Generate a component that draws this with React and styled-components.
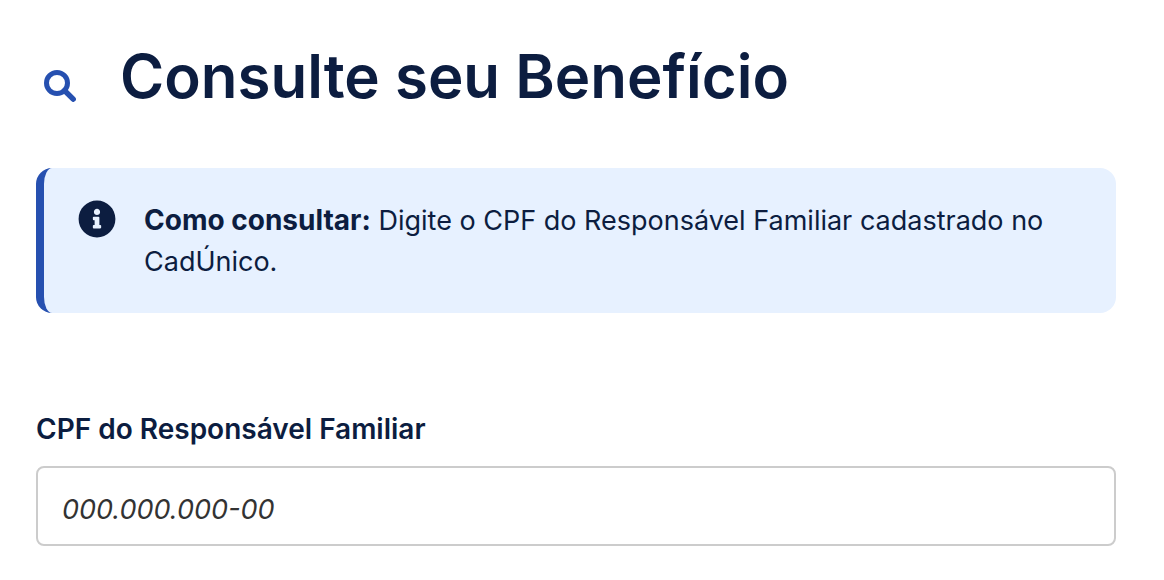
import React from "react";
import styled, { createGlobalStyle } from "styled-components";
import { FaInfoCircle } from "react-icons/fa";

export default function App() {

    function SearchIcon() {
        return (
            <svg viewBox="0 0 32 32" fill="none" stroke="currentColor" aria-hidden="true">
                <circle cx="13" cy="13" r="10.5" strokeWidth="5" />
                <path d="M20.5 20.5L29.2 29.2" strokeWidth="5.4" strokeLinecap="round" />
            </svg>
        )
    };

    return (
        <>
            <GlobalStyle />
            <Page>
                <Header>
                    <SearchIcon />
                    <Title>Consulte seu Benefício</Title>
                </Header>

                <InfoBox>
                    <FaInfoCircle aria-hidden="true" />
                    <InfoText>
                        <strong>Como consultar:</strong> Digite o CPF do Responsável Familiar cadastrado no CadÚnico.
                    </InfoText>
                </InfoBox>

                <Form>
                    <Label htmlFor="cpf">CPF do Responsável Familiar</Label>
                    <Input id="cpf" type="text" inputMode="numeric" placeholder="000.000.000-00" />
                </Form>
            </Page>
        </>
    )
};

const GlobalStyle = createGlobalStyle`

    * {
        box-sizing: border-box;
    }

    body {
        margin: 0;
        color: #0c1d40;
        background-color: #FFFFFF;
        font-family: Inter, sans-serif;
    }
`;

const Page = styled.main`

    padding: 36px 48px 34px 36px;
`;

const Header = styled.header`

    display: flex;
    align-items: center;
    gap: 44px;
    padding-left: 8px;
    margin-bottom: 52px;

    svg {
        width: 32px;
        height: 32px;
        flex-shrink: 0;
        margin-top: 20px;
        color: #2650b0;
    }
`;

const Title = styled.h1`

    margin: 0;
    font-size: 60px;
    font-weight: 600;
    line-height: 80px;
`;

// ------------------------------>>

const InfoBox = styled.section`

    display: flex;
    align-items: flex-start;
    gap: 28px;
    padding: 32px 34px 31px;
    border-radius: 16px;
    border-left: 8px solid #2650b0;
    background-color: #e7f1ff;

    svg {
        width: 38px;
        height: 38px;
        flex-shrink: 0;
    }
`;

const InfoText = styled.p`

    margin: 0;
    font-size: 27px;
    line-height: 41px;

    strong {
        font-size: 28px;
        font-weight: 700;
    }
`;

// ------------------------------>>

const Form = styled.form`

    display: flex;
    flex-direction: column;
    gap: 16px;
    margin-top: 96px;
`;

const Label = styled.label`

    font-size: 28px;
    font-weight: 600;
    line-height: 41px;
`;

const Input = styled.input`

    width: 100%;
    height: 80px;
    padding: 6px 24px 0;
    color: #333333;
    font-family: inherit;
    font-size: 27px;
    border: 2px solid #cccccc;
    border-radius: 8px;
    background-color: #FFFFFF;

    &::placeholder {
        color: #333333;
        font-style: italic;
        opacity: 1;
    }
`;
